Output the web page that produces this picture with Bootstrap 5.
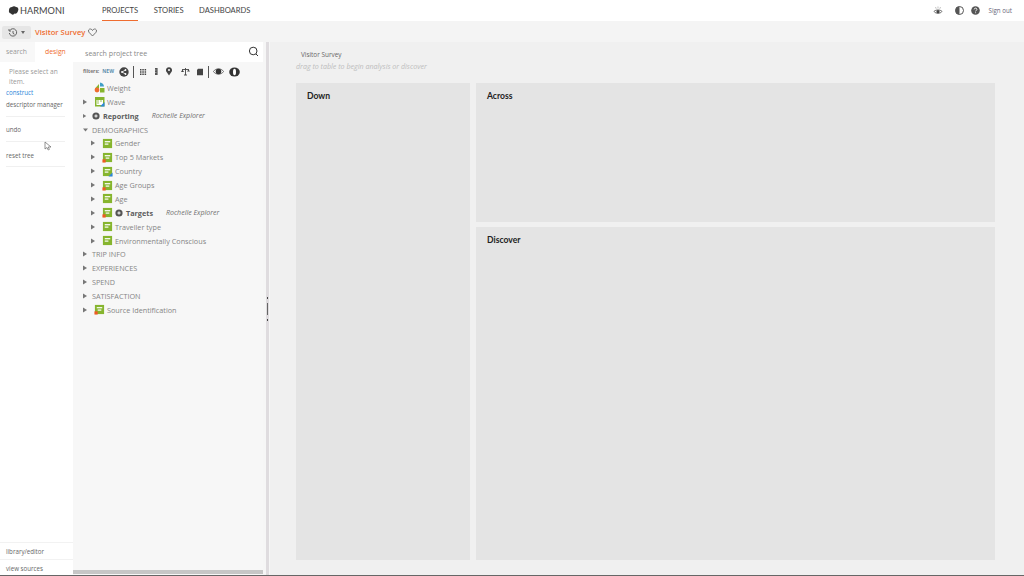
<!DOCTYPE html>
<html lang="en">
<head>
<meta charset="utf-8">
<title>Harmoni</title>
<link href="https://cdn.jsdelivr.net/npm/bootstrap@5.3.0/dist/css/bootstrap.min.css" rel="stylesheet">
<style>
html,body{width:1024px;height:576px;overflow:hidden}
body{font-family:"Open Sans","Liberation Sans",sans-serif;font-size:7.5px;color:#666;background:#f0f0f0;position:relative}
svg{display:block;flex:none}
.shell{width:1024px;height:576px}
.topbar{height:21px;background:#fff;padding:0}
.brand{font-family:"Lato",sans-serif;font-size:9.2px;letter-spacing:0;color:#444;width:102px;padding-left:8px;gap:1px}
.toplink{font-family:"Lato",sans-serif;font-size:7.6px;color:#444;height:21px;line-height:21px;padding:0;margin-right:15.500px}
.toplink.on{box-shadow:inset 0 -1px 0 #ef6c2f}
.ticon-eye{margin-right:12px}
.ticon-half{margin-right:7px}
.signout{font-size:6.2px;color:#667;margin:0 12px 0 9px}
.crumb{height:21px;background:#f4f4f4;padding:2px 0 0 2px}
.histbtn{width:29px;height:13px;background:#e6e6e6;border-radius:2px;gap:3px;padding-left:6px}
.surveyname{font-size:7.6px;font-weight:600;color:#ef6c2f;margin:0 3px 0 4px}
.work{height:534px}
.leftcol{width:73px;background:#fff;font-size:6.2px;color:#666}
.tabbar{height:20px;background:#f8f8f8}
.tabitem{width:35px;padding-left:6px;line-height:20px;color:#999;font-size:6.8px}
.tabitem.on{color:#ef6c2f;background:#fff;width:38px;padding-left:10px}
.hint{padding:5px 4px 1px 9px;line-height:9.500px;color:#999;font-size:6.6px}
.leftlink{padding-left:6px;line-height:12px}
.leftlink.blue{color:#2b86d9;margin-top:0}
.leftsep{height:1px;background:#f0f0f0;margin:5px 8px 0 6px}
.leftgap7{margin-top:7px}
.leftgap8{margin-top:8px}
.sep4{margin-top:4px}
.leftfoot{border-top:1px solid #f2f2f2;padding-left:6px;height:17px;line-height:17px}
.treecol{width:190px;background:#f7f7f7}
.searchrow{height:20px;background:#fff;padding:2px 4px 0 12px;font-size:7.1px;color:#888}
.searchglass{margin-top:-3px}
.filterrow{height:18px;padding:1px 0 0 10px}
.filterword{font-size:5px;font-weight:700;color:#777}
.filternew{font-size:5px;font-weight:700;color:#5f8fae;margin-left:3px}
.fi{margin-left:5px}
.fi-wide{margin-left:8px}
.fi-doc{margin-left:6px}
.fi-sep{margin-left:4px}
.vsep{width:1px;height:12px;background:#555}
.treebody{font-size:7.25px;color:#858585;padding-top:1px}
.tr{height:13.875px;line-height:14px;white-space:nowrap}
.tr .caret{width:11px;flex:none}
.tr .caret.caretsm{width:9px}
.lv0{padding-left:10px}
.lv1{padding-left:18px}
.tname{margin-left:2px}
.tgt2{margin-left:2px}
.strong{font-weight:700;color:#5c5c5c;margin-left:3px}
.who{font-style:italic;color:#707070;margin-left:13px;font-size:7px}
.upper{margin-left:-2px}
.hscroll{height:4px;background:#c6c6c6}
.hspace{height:2px}
.splitter{width:7px;background:#f6f6f6}
.splitbar{width:3px;background:#dfdcdf;height:100%;margin-left:3px}
.gripwrap{margin-left:-2px;width:1px;gap:4px}
.grip{width:1px;height:12px;background:#666}
.gripdot{width:1px;height:2px;background:#444}
.stage{width:754px;padding:7px 29px 0 26px}
.stagetitle{font-size:6.4px;color:#666;padding-left:5px;line-height:12px}
.stagehint{font-size:7.1px;font-style:italic;color:#bdbdbd;line-height:10px;margin-bottom:12px}
.zones{height:477px;gap:6px}
.zone{background:#e4e4e4;padding:6px 11px;font-family:"Lato",sans-serif;font-weight:700;font-size:8.6px;color:#222;line-height:14px}
.zdown{width:174px}
.zright{width:519px;gap:5px}
.zacross{height:139px}
.pointer{position:absolute;left:44px;top:141px}
.bottomline{position:absolute;left:0;right:0;bottom:0;height:1px;background:#666}
</style>
</head>
<body>
<svg width="0" height="0" class="position-absolute">
<defs>
<symbol id="doc" viewBox="0 0 12 12"><rect x="1" y="1" width="10" height="10" fill="#86b52e"/><rect x="3" y="3.400" width="6" height="1.300" fill="#fff"/><rect x="3" y="6" width="4" height="1.300" fill="#fff"/></symbol>
<symbol id="docr" viewBox="0 0 12 12"><rect x="1" y="1" width="10" height="10" fill="#86b52e"/><rect x="3" y="3.400" width="6" height="1.300" fill="#fff"/><rect x="4" y="6" width="4" height="1.300" fill="#fff"/><rect x="0.500" y="8" width="3.500" height="3.500" fill="#ef5a24"/></symbol>
<symbol id="docb" viewBox="0 0 12 12"><rect x="1" y="1" width="10" height="10" fill="#86b52e"/><rect x="3" y="3.400" width="6" height="1.300" fill="#fff"/><rect x="3" y="6" width="4" height="1.300" fill="#fff"/><path d="M7 11.500 11.500 7v4.500Z" fill="#2b86d9"/></symbol>
<symbol id="tgt" viewBox="0 0 10 10"><circle cx="5" cy="5" r="4.500" fill="#555"/><path d="M3 5h4M5 3v4" stroke="#fff" stroke-width="1.200"/></symbol>
<symbol id="car" viewBox="0 0 11 6"><path d="M0 .5 4 3 0 5.500Z" fill="#777"/></symbol>
</defs>
</svg>
<div class="shell d-flex flex-column">
  <nav class="topbar d-flex align-items-center">
    <div class="brand d-flex align-items-center">
      <svg width="11" height="9" viewBox="0 0 11 9"><path d="M1 4C1 2 2.500 1 4 1c1-1 3-1 4 0 2 0 3 2 2 4-.5 2-2 3-3.500 2.500C6 9 3.500 9 3 7.500 1.500 7.500.5 6 1 4Z" fill="#333"/></svg>
      <span>HARMONI</span>
    </div>
    <a class="toplink on text-decoration-none">PROJECTS</a>
    <a class="toplink text-decoration-none">STORIES</a>
    <a class="toplink text-decoration-none">DASHBOARDS</a>
    <div class="ms-auto d-flex align-items-center">
      <svg class="ticon-eye" width="10" height="10" viewBox="0 0 10 10"><path d="M1 5.500C2.500 3.500 7.500 3.500 9 5.500 7.500 7.800 2.500 7.800 1 5.500Z" fill="none" stroke="#555" stroke-width=".9"/><circle cx="5" cy="5.700" r="1.600" fill="#444"/><path d="M5 .5v2M2.500 1l.7 1.800M7.500 1l-.7 1.800" stroke="#999" stroke-width=".6"/></svg>
      <svg class="ticon-half" width="9" height="9" viewBox="0 0 9 9"><circle cx="4.500" cy="4.500" r="4" fill="#fff" stroke="#555"/><path d="M4.500.5a4 4 0 0 0 0 8Z" fill="#555"/></svg>
      <svg width="9" height="9" viewBox="0 0 9 9"><circle cx="4.500" cy="4.500" r="4.300" fill="#555"/><path d="M3.200 3.400c.1-1.700 2.700-1.700 2.700 0 0 1-1.300 1-1.300 2M4.600 6.300v.9" fill="none" stroke="#fff" stroke-width=".9"/></svg>
      <span class="signout">Sign out</span>
    </div>
  </nav>
  <div class="crumb d-flex align-items-center">
    <div class="histbtn d-flex align-items-center">
      <svg width="10" height="10" viewBox="0 0 10 10"><path d="M1.800 2.500A3.700 3.700 0 1 1 1.300 5M1 1v2h2M5 3v2.300l1.500 1" fill="none" stroke="#555" stroke-width=".9"/></svg>
      <svg width="4" height="3" viewBox="0 0 4 3"><path d="M0 0h4L2 3Z" fill="#666"/></svg>
    </div>
    <span class="surveyname">Visitor Survey</span>
    <svg width="9" height="9" viewBox="0 0 9 9"><path d="M4.500 8 1 4.300C-.3 2.500 1 .8 2.500 1c1 .1 1.600.7 2 1.500C4.900 1.700 5.500 1.100 6.500 1 8 .8 9.300 2.500 8 4.300Z" fill="none" stroke="#555" stroke-width=".8"/></svg>
  </div>
  <div class="work d-flex">
    <aside class="leftcol d-flex flex-column">
      <div class="tabbar d-flex"><div class="tabitem">search</div><div class="tabitem on">design</div></div>
      <div class="hint">Please select an item.</div>
      <div class="leftlink blue">construct</div>
      <div class="leftlink">descriptor manager</div>
      <div class="leftsep"></div>
      <div class="leftlink leftgap7">undo</div>
      <div class="leftsep"></div>
      <div class="leftlink leftgap8">reset tree</div>
      <div class="leftsep sep4"></div>
      <div class="mt-auto leftfoot">library/editor</div>
      <div class="leftfoot">view sources</div>
    </aside>
    <section class="treecol d-flex flex-column">
      <div class="searchrow d-flex align-items-center justify-content-between">
        <span>search project tree</span>
        <svg class="searchglass" width="11" height="11" viewBox="0 0 11 11"><circle cx="5.200" cy="5" r="3.800" fill="none" stroke="#333" stroke-width="1"/><path d="M8 8l2 2" stroke="#333" stroke-width="1"/></svg>
      </div>
      <div class="filterrow d-flex align-items-center">
        <span class="filterword">filters:</span><span class="filternew">NEW</span>
        <svg class="fi" width="10" height="10" viewBox="0 0 10 10"><circle cx="5" cy="5" r="4.700" fill="#444"/><path d="M3 5l3.500-2M3 5l3.500 2" stroke="#fff" stroke-width=".8"/><circle cx="3" cy="5" r=".9" fill="#fff"/><circle cx="6.500" cy="3" r=".9" fill="#fff"/><circle cx="6.500" cy="7" r=".9" fill="#fff"/></svg>
        <span class="vsep fi-sep"></span>
        <svg class="fi" width="8" height="8" viewBox="0 0 8 8" fill="#444"><path d="M1 1h1.500v1.500H1zM3.300 1h1.500v1.500H3.300zM5.600 1h1.500v1.500H5.600zM1 3.300h1.500v1.500H1zM3.300 3.300h1.500v1.500H3.300zM5.600 3.300h1.500v1.500H5.600zM1 5.600h1.500v1.500H1zM3.300 5.600h1.500v1.500H3.300zM5.600 5.600h1.500v1.500H5.600z"/></svg>
        <svg class="fi" width="8" height="9" viewBox="0 0 8 9"><rect x="3" y="1" width="2.600" height="7" fill="#555"/><path d="M3 3h1.500M3 5.500h1.500" stroke="#ccc" stroke-width=".6"/></svg>
        <svg class="fi" width="8" height="9" viewBox="0 0 8 9"><path d="M4 8.500 1.300 4.500A3 3 0 1 1 6.700 4.500Z" fill="#444"/><circle cx="4" cy="3" r="1" fill="#fff"/></svg>
        <svg class="fi-wide" width="9" height="9" viewBox="0 0 9 9"><path d="M1 2.500h7M4.500 1v7M3 8h3" stroke="#444" stroke-width=".9" fill="none"/><path d="M0 5h3L1.500 2.500ZM6 4.500h3L7.500 2.500Z" fill="#444"/></svg>
        <svg class="fi-doc" width="8" height="8" viewBox="0 0 8 8"><path d="M2 .8h5v6.400H1V2Z" fill="#444"/></svg>
        <span class="vsep fi-sep"></span>
        <svg class="fi-sep" width="11" height="9" viewBox="0 0 11 9"><path d="M.5 4.500C2.500 1 8.500 1 10.500 4.500 8.500 8 2.500 8 .5 4.500Z" fill="#fff" stroke="#444" stroke-width=".8"/><circle cx="5.500" cy="4.500" r="2.800" fill="#333"/></svg>
        <svg class="fi" width="11" height="10" viewBox="0 0 11 10"><ellipse cx="5.500" cy="5" rx="5.300" ry="4.500" fill="#333"/><ellipse cx="5.500" cy="5" rx="1.500" ry="3.200" fill="#fff"/></svg>
      </div>
      <div class="treebody flex-grow-1">
        <div class="tr d-flex align-items-center lv0"><span class="caret"></span>
          <svg width="11" height="11" viewBox="0 0 11 11"><path d="M6 .5a4.500 4.500 0 0 1 4 4H6Z" fill="#3f9fc6"/><path d="M5 2 1 6.500h4Z" fill="#86b52e"/><circle cx="3" cy="8" r="2.400" fill="#ef6c2f"/><path d="M6 6h4.500v4.500H6Z" fill="#86b52e"/></svg>
          <span class="tname">Weight</span></div>
        <div class="tr d-flex align-items-center lv0"><svg class="caret" width="11" height="6"><use href="#car"/></svg>
          <svg width="11" height="11" viewBox="0 0 11 11"><rect x="1" y="1" width="9.500" height="9.500" fill="#86b52e"/><rect x="2.500" y="4" width="6.500" height="5" fill="#fff"/><path d="M3 5h2M6 5h2M3 7h2" stroke="#86b52e" stroke-width=".8"/><path d="M6 10.500 10.500 6v4.500Z" fill="#2b86d9"/></svg>
          <span class="tname">Wave</span></div>
        <div class="tr d-flex align-items-center lv0"><svg class="caret caretsm" width="9" height="6"><use href="#car"/></svg>
          <svg width="8" height="8"><use href="#tgt"/></svg>
          <span class="tname strong">Reporting</span><span class="who">Rochelle Explorer</span></div>
        <div class="tr d-flex align-items-center lv0"><svg class="caret" width="11" height="6" viewBox="0 0 11 6"><path d="M0 1.500h5L2.500 4.500Z" fill="#777"/></svg>
          <span class="upper">DEMOGRAPHICS</span></div>
        <div class="tr d-flex align-items-center lv1"><svg class="caret" width="11" height="6"><use href="#car"/></svg><svg width="11" height="11"><use href="#doc"/></svg><span class="tname">Gender</span></div>
        <div class="tr d-flex align-items-center lv1"><svg class="caret" width="11" height="6"><use href="#car"/></svg><svg width="11" height="11"><use href="#docr"/></svg><span class="tname">Top 5 Markets</span></div>
        <div class="tr d-flex align-items-center lv1"><svg class="caret" width="11" height="6"><use href="#car"/></svg><svg width="11" height="11"><use href="#docb"/></svg><span class="tname">Country</span></div>
        <div class="tr d-flex align-items-center lv1"><svg class="caret" width="11" height="6"><use href="#car"/></svg><svg width="11" height="11"><use href="#docr"/></svg><span class="tname">Age Groups</span></div>
        <div class="tr d-flex align-items-center lv1"><svg class="caret" width="11" height="6"><use href="#car"/></svg><svg width="11" height="11"><use href="#doc"/></svg><span class="tname">Age</span></div>
        <div class="tr d-flex align-items-center lv1"><svg class="caret" width="11" height="6"><use href="#car"/></svg><svg width="11" height="11"><use href="#docr"/></svg><svg class="tgt2" width="8" height="8"><use href="#tgt"/></svg><span class="tname strong">Targets</span><span class="who">Rochelle Explorer</span></div>
        <div class="tr d-flex align-items-center lv1"><svg class="caret" width="11" height="6"><use href="#car"/></svg><svg width="11" height="11"><use href="#doc"/></svg><span class="tname">Traveller type</span></div>
        <div class="tr d-flex align-items-center lv1"><svg class="caret" width="11" height="6"><use href="#car"/></svg><svg width="11" height="11"><use href="#doc"/></svg><span class="tname">Environmentally Conscious</span></div>
        <div class="tr d-flex align-items-center lv0"><svg class="caret" width="11" height="6"><use href="#car"/></svg><span class="upper">TRIP INFO</span></div>
        <div class="tr d-flex align-items-center lv0"><svg class="caret" width="11" height="6"><use href="#car"/></svg><span class="upper">EXPERIENCES</span></div>
        <div class="tr d-flex align-items-center lv0"><svg class="caret" width="11" height="6"><use href="#car"/></svg><span class="upper">SPEND</span></div>
        <div class="tr d-flex align-items-center lv0"><svg class="caret" width="11" height="6"><use href="#car"/></svg><span class="upper">SATISFACTION</span></div>
        <div class="tr d-flex align-items-center lv0"><svg class="caret" width="11" height="6"><use href="#car"/></svg><svg width="11" height="11"><use href="#docr"/></svg><span class="tname">Source Identification</span></div>
      </div>
      <div class="hscroll"></div>
      <div class="hspace"></div>
    </section>
    <div class="splitter d-flex align-items-center">
      <div class="splitbar"></div>
      <div class="gripwrap d-flex flex-column"><div class="gripdot"></div><div class="grip"></div><div class="gripdot"></div></div>
    </div>
    <main class="stage d-flex flex-column">
      <div class="stagetitle">Visitor Survey</div>
      <div class="stagehint">drag to table to begin analysis or discover</div>
      <div class="zones d-flex">
        <div class="zone zdown">Down</div>
        <div class="zright d-flex flex-column">
          <div class="zone zacross">Across</div>
          <div class="zone flex-grow-1">Discover</div>
        </div>
      </div>
    </main>
  </div>
</div>
<svg class="pointer" width="8" height="11" viewBox="0 0 8 11"><path d="M1 1v7l2-1.500 1.200 2.500 1.200-.6-1.200-2.400H7Z" fill="#fff" stroke="#666" stroke-width=".7"/></svg>
<div class="bottomline"></div>
</body>
</html>
